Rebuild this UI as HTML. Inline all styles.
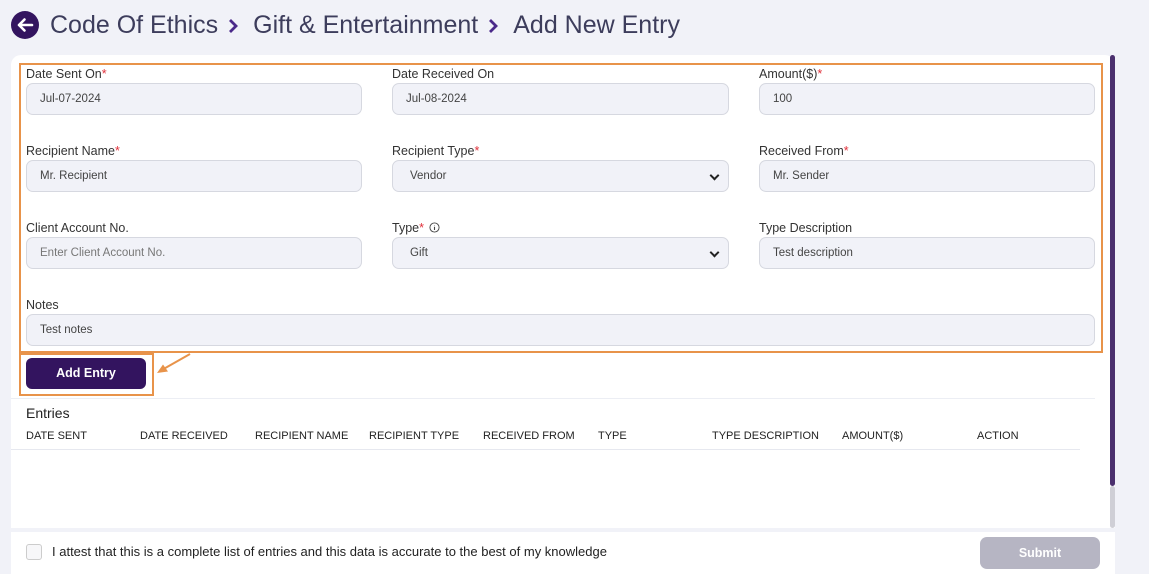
<!DOCTYPE html>
<html><head><meta charset="utf-8"><style>
*{box-sizing:border-box;margin:0;padding:0}
body{width:1149px;height:574px;overflow:hidden;background:#f1f2f8;font-family:"Liberation Sans",sans-serif;position:relative}
.abs{position:absolute}
.title{left:50px;top:11px;font-size:25px;color:#3d3d5c;white-space:nowrap}
.title svg{margin:0 14px 0 10px;vertical-align:-1px}
.card{left:11px;top:55px;width:1104px;height:473px;background:#fff;border-radius:10px 10px 0 0}
.lbl{font-size:12.5px;color:#333}
.lbl b{color:#e0303a;font-weight:normal}
.inp{height:32px;background:#f1f2f8;border:1px solid #d6d8e0;border-radius:7px;font-size:11.5px;color:#444;padding-left:13px;line-height:31px}
.sel::after{content:"";position:absolute;right:10px;top:11px;width:5px;height:5px;border-right:2px solid #222;border-bottom:2px solid #222;transform:rotate(45deg)}
.th{font-size:11px;color:#222;top:430px}
</style></head><body>
<div class="abs" style="left:11px;top:11px;width:28px;height:28px;border-radius:50%;background:#33145f">
<svg width="28" height="28" viewBox="0 0 28 28"><path d="M21 14H8M13.5 8.5L8 14l5.5 5.5" stroke="#fff" stroke-width="2.6" fill="none" stroke-linecap="round" stroke-linejoin="round"/></svg></div>
<div class="abs title">Code Of Ethics<svg width="11" height="16" viewBox="0 0 11 16"><path d="M2 2l6 6-6 6" stroke="#4b2a8a" stroke-width="2.8" fill="none"/></svg>Gift &amp; Entertainment<svg width="11" height="16" viewBox="0 0 11 16"><path d="M2 2l6 6-6 6" stroke="#4b2a8a" stroke-width="2.8" fill="none"/></svg>Add New Entry</div>
<div class="abs card"></div>
<div class="abs" style="left:1110px;top:55px;width:5px;height:431px;background:#4b306e;border-radius:3px"></div>
<div class="abs" style="left:1110px;top:486px;width:5px;height:42px;background:#cfcfd6;border-radius:3px"></div>
<div class="abs" style="left:19px;top:63px;width:1084px;height:290px;border:2px solid #e8934a"></div>

<div class="abs lbl" style="left:26px;top:67px">Date Sent On<b>*</b></div>
<div class="abs inp" style="left:26px;top:83px;width:336px">Jul-07-2024</div>
<div class="abs lbl" style="left:392px;top:67px">Date Received On</div>
<div class="abs inp" style="left:392px;top:83px;width:337px">Jul-08-2024</div>
<div class="abs lbl" style="left:759px;top:67px">Amount($)<b>*</b></div>
<div class="abs inp" style="left:759px;top:83px;width:336px">100</div>

<div class="abs lbl" style="left:26px;top:144px">Recipient Name<b>*</b></div>
<div class="abs inp" style="left:26px;top:160px;width:336px">Mr. Recipient</div>
<div class="abs lbl" style="left:392px;top:144px">Recipient Type<b>*</b></div>
<div class="abs inp sel" style="left:392px;top:160px;width:337px;padding-left:17px">Vendor</div>
<div class="abs lbl" style="left:759px;top:144px">Received From<b>*</b></div>
<div class="abs inp" style="left:759px;top:160px;width:336px">Mr. Sender</div>

<div class="abs lbl" style="left:26px;top:221px">Client Account No.</div>
<div class="abs inp" style="left:26px;top:237px;width:336px;color:#777">Enter Client Account No.</div>
<div class="abs lbl" style="left:392px;top:221px">Type<b>*</b> <svg width="11" height="11" viewBox="0 0 12 12" style="vertical-align:-1px;margin-left:2px"><circle cx="6" cy="6" r="5" stroke="#444" fill="none"/><path d="M6 5.2v3.5M6 3.3v.4" stroke="#444" stroke-width="1.2"/></svg></div>
<div class="abs inp sel" style="left:392px;top:237px;width:337px;padding-left:17px">Gift</div>
<div class="abs lbl" style="left:759px;top:221px">Type Description</div>
<div class="abs inp" style="left:759px;top:237px;width:336px">Test description</div>

<div class="abs lbl" style="left:26px;top:298px">Notes</div>
<div class="abs inp" style="left:26px;top:314px;width:1069px">Test notes</div>

<div class="abs" style="left:19px;top:353px;width:135px;height:43px;border:2px solid #e8934a"></div>
<div class="abs" style="left:26px;top:358px;width:120px;height:31px;background:#33145f;border-radius:6px;color:#fff;font-weight:bold;font-size:12.5px;text-align:center;line-height:31px">Add Entry</div>
<svg class="abs" style="left:154px;top:352px" width="40" height="26"><path d="M36 2L6 19" stroke="#e8934a" stroke-width="2"/><path d="M3 21l11-1.5-5-7z" fill="#e8934a"/></svg>

<div class="abs" style="left:11px;top:398px;width:1084px;height:1px;background:#eceef4"></div>
<div class="abs" style="left:26px;top:405px;font-size:14px;color:#222">Entries</div>
<div class="abs th" style="left:26px">DATE SENT</div>
<div class="abs th" style="left:140px">DATE RECEIVED</div>
<div class="abs th" style="left:255px">RECIPIENT NAME</div>
<div class="abs th" style="left:369px">RECIPIENT TYPE</div>
<div class="abs th" style="left:483px">RECEIVED FROM</div>
<div class="abs th" style="left:598px">TYPE</div>
<div class="abs th" style="left:712px">TYPE DESCRIPTION</div>
<div class="abs th" style="left:842px">AMOUNT($)</div>
<div class="abs th" style="left:977px">ACTION</div>
<div class="abs" style="left:11px;top:449px;width:1069px;height:1px;background:#e6e8ef"></div>

<div class="abs" style="left:11px;top:532px;width:1104px;height:42px;background:#fff"></div>
<div class="abs" style="left:26px;top:544px;width:16px;height:16px;border:1px solid #ccc;border-radius:3px;background:#f7f7f9"></div>
<div class="abs" style="left:52px;top:544px;font-size:13px;color:#222">I attest that this is a complete list of entries and this data is accurate to the best of my knowledge</div>
<div class="abs" style="left:980px;top:537px;width:120px;height:32px;background:#b6b5c3;border-radius:7px;color:#fff;font-weight:bold;font-size:12.5px;text-align:center;line-height:32px">Submit</div>
</body></html>
